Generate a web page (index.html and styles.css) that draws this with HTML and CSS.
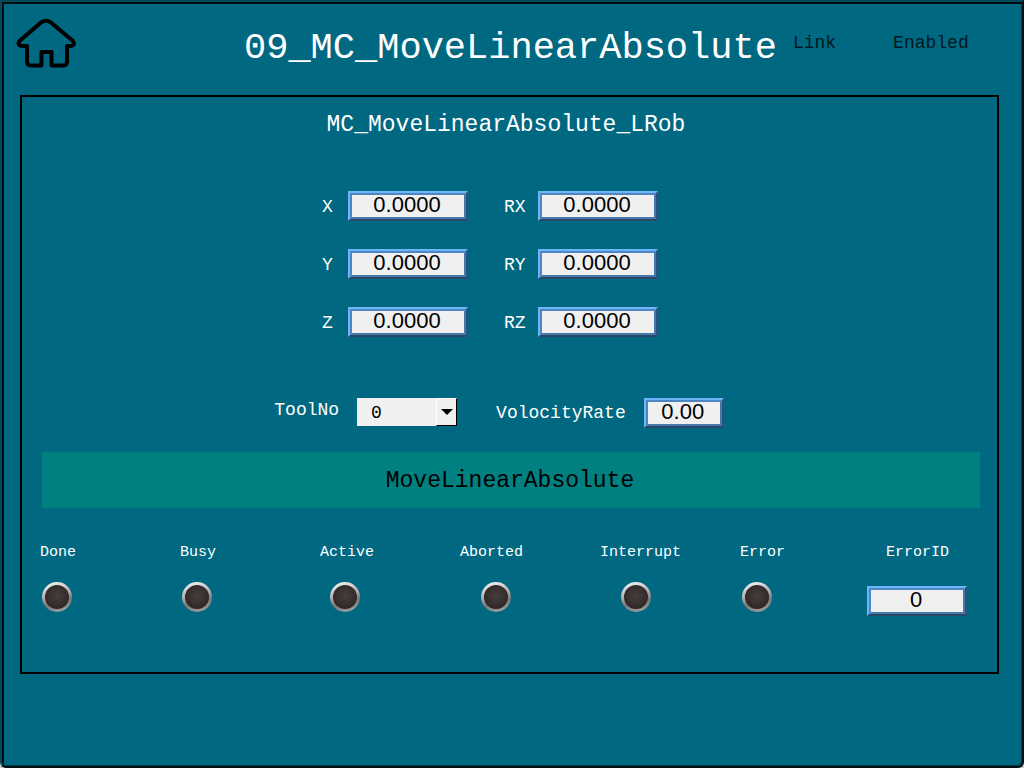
FILE: index.html
```html
<!DOCTYPE html>
<html lang="en">
<head>
<meta charset="utf-8">
<meta name="viewport" content="width=device-width, initial-scale=1">
<title>09_MC_MoveLinearAbsolute</title>
<link rel="stylesheet" href="styles.css">
</head>
<body>
<div class="screen">
  <header class="header">
    <button class="home" type="button" aria-label="Home">
      <svg viewBox="0 0 60 50" width="60" height="50"><path d="M24 4.500Q29 1 34 4.500L56 23Q59 27 54 28H50V43Q50 47.500 46 47.500H34.500V34H24.500V47.500H14Q10 47.500 10 43V28H5Q-0.500 27 2.500 23Z"/></svg>
    </button>
    <h1 class="title">09_MC_MoveLinearAbsolute</h1>
    <span class="state">Link</span>
    <span class="state">Enabled</span>
  </header>

  <main class="panel">
    <h2 class="subtitle">MC_MoveLinearAbsolute_LRob</h2>

    <div class="coords">
      <label for="x">X</label><input class="field" id="x" value="0.0000">
      <label class="second" for="rx">RX</label><input class="field" id="rx" value="0.0000">
      <label for="y">Y</label><input class="field" id="y" value="0.0000">
      <label class="second" for="ry">RY</label><input class="field" id="ry" value="0.0000">
      <label for="z">Z</label><input class="field" id="z" value="0.0000">
      <label class="second" for="rz">RZ</label><input class="field" id="rz" value="0.0000">
    </div>

    <div class="options">
      <label for="tool">ToolNo</label>
      <div class="dropdown">
        <select id="tool"><option>0</option><option>1</option></select>
        <span class="arrow"><svg viewBox="0 0 12 6" width="12" height="6"><path d="M0 0H12L6 6Z"/></svg></span>
      </div>
      <label class="rate-label" for="rate">VolocityRate</label>
      <input class="field rate" id="rate" value="0.00">
    </div>

    <button class="execute" type="button">MoveLinearAbsolute</button>

    <div class="statuses">
      <div class="status"><span>Done</span><i class="lamp"></i></div>
      <div class="status"><span>Busy</span><i class="lamp"></i></div>
      <div class="status"><span>Active</span><i class="lamp mid"></i></div>
      <div class="status"><span>Aborted</span><i class="lamp far"></i></div>
      <div class="status"><span>Interrupt</span><i class="lamp far"></i></div>
      <div class="status"><span>Error</span><i class="lamp"></i></div>
      <div class="status error-id"><label for="error-id">ErrorID</label><input class="field" id="error-id" value="0"></div>
    </div>
  </main>
</div>
</body>
</html>
```
FILE: styles.css
```css
* { box-sizing: border-box; }

body {
  margin: 0;
  background: #c8d0d4;
  color: #fff;
  font: 18px/24px "Liberation Mono", monospace;
}

h1, h2 { margin: 0; font-weight: 400; }

button, input, select { margin: 0; font: inherit; }

.screen {
  min-height: 100vh;
  padding: 12px 23px 92px 14px;
  display: flex;
  flex-direction: column;
  background: #006881;
  border: 2px solid;
  border-color: #004a5c #001015 #001015 #004a5c;
  border-radius: 0 0 6px 6px;
  box-shadow: inset 2px 2px 0 #000c10, inset -1px -1px 0 #003846;
}

.header {
  display: flex;
  align-items: flex-start;
  height: 81px;
}

.home {
  width: 60px;
  height: 50px;
  margin-top: 4px;
  padding: 0;
  border: 0;
  background: none;
}

.home svg { display: block; margin-left: 1px; overflow: visible; fill: none; stroke: #000; stroke-width: 4; stroke-linejoin: round; }

.title {
  margin-left: 168px;
  font-size: 37px;
  line-height: 68px;
}

.state { margin: 17px 0 0 16px; color: #001820; }
.state + .state { margin-left: 57px; }

.panel {
  flex: 1;
  margin-left: 4px;
  padding: 12px 17px 0 20px;
  border: 2px solid #000;
}

.subtitle {
  padding-right: 10px;
  font-size: 23px;
  line-height: 32px;
  text-align: center;
}

.coords {
  display: grid;
  grid-template-columns: 26px 120px 70px 120px;
  row-gap: 28px;
  justify-content: center;
  align-items: center;
  margin: 50px 42px 0 0;
}

.coords label { padding-top: 2px; }

.coords .second { padding-left: 36px; }

.coords .field { width: 120px; }

.field {
  height: 30px;
  padding: 0 2px 3px 0;
  border: 2px solid;
  border-color: #6db5f8 #2f5276 #2a4868 #6db5f8;
  border-radius: 0;
  outline: 0;
  background: #f0f0f0;
  box-shadow: inset 2px 2px 0 #4d86c0, inset -2px -2px 0 #4879ac;
  color: #000;
  font: 22px/24px "Liberation Sans", Arial, sans-serif;
  text-align: center;
}

.options {
  display: flex;
  align-items: flex-start;
  justify-content: center;
  margin: 61px 24px 0 0;
}

.dropdown { position: relative; width: 100px; margin-left: 18px; }

.dropdown select {
  display: block;
  width: 100%;
  height: 28px;
  padding: 2px 24px 0 14px;
  border: 0;
  border-radius: 0;
  appearance: none;
  background: #f0f0f0;
  color: #000;
}

.arrow {
  position: absolute;
  top: 0;
  right: 0;
  width: 21px;
  height: 28px;
  display: grid;
  place-items: center;
  border: 1px solid;
  border-color: #fff #000 #000 #fff;
  background: #f0f0f0;
  pointer-events: none;
}

.rate-label { margin: 3px 0 0 39px; }
.rate { width: 80px; margin-left: 18px; }

.execute {
  display: block;
  width: 100%;
  height: 56px;
  margin-top: 24px;
  padding: 2px 2px 0 0;
  border: 0;
  background: #008080;
  color: #000;
  font-size: 23px;
}

.statuses {
  display: grid;
  grid-template-columns: repeat(6, 140fr) 98fr;
  margin-top: 33px;
  font-size: 15px;
}

.status { display: flex; flex-direction: column; align-items: flex-start; }

.status > span { margin-left: -2px; }
.status > label { margin-left: 4px; }

.lamp {
  width: 30px;
  height: 30px;
  margin-top: 17px;
  padding: 3px;
  border-radius: 50%;
  background:
    radial-gradient(circle at 50% 45%, #463e3d 0, #342b2a 60%, #181414 100%) content-box,
    linear-gradient(165deg, #fff 0, #b5b5b5 40%, #777 65%, #aaa 100%) border-box;
}

.mid { margin-left: 8px; }
.far { margin-left: 19px; }

.error-id .field { width: 100px; margin: 21px 0 0 -15px; }
```
